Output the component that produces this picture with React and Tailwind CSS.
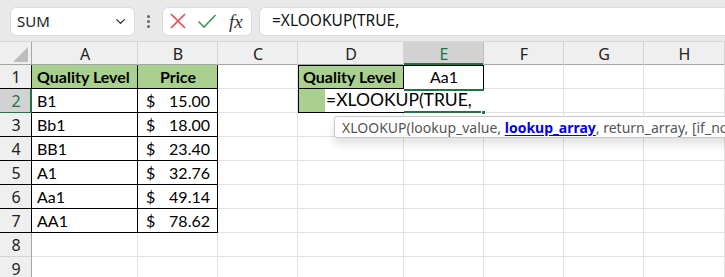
import { ChevronDown } from 'lucide-react'

const COLS = ['A', 'B', 'C', 'D', 'E', 'F', 'G', 'H']
const WIDTHS = ['w-[106px]', 'w-[80px]', 'w-[80px]', 'w-[106px]', 'w-[80px]', 'w-[80px]', 'w-[80px]', 'w-[81px]']

const DATA = [
  ['B1', '15.00'],
  ['Bb1', '18.00'],
  ['BB1', '23.40'],
  ['A1', '32.76'],
  ['Aa1', '49.14'],
  ['AA1', '78.62'],
]

const cellFont = "font-['Lato','Liberation_Sans',sans-serif] text-[16px] text-black"
const uiFont = "font-['Noto_Sans','Open_Sans',sans-serif]"
const grid = 'shadow-[inset_-1px_-1px_0_#e1e1e1]'
const boxed = 'shadow-[inset_-1px_-1px_0_#000]'

function RowHead({ n, active, dark }) {
  return (
    <div className={`w-[32px] h-[24px] flex items-center justify-center shrink-0 ${uiFont} text-[16px] ${
      active
        ? 'bg-[#d2d2d2] text-[#217346] shadow-[inset_-2px_-1px_0_#217346]'
        : dark
          ? 'bg-[#efefef] text-[#222] shadow-[inset_-1px_-1px_0_#000,inset_0_-1px_0_#d4d4d4]'
          : 'bg-[#efefef] text-[#222] shadow-[inset_-1px_0_0_#a6a6a6,inset_0_-1px_0_#d4d4d4]'
    }`}>
      {n}
    </div>
  )
}

function Empty({ i }) {
  return <div className={`${WIDTHS[i]} h-[24px] shrink-0 bg-white ${grid}`} />
}

export default function App() {
  return (
    <div className="w-[725px] h-[277px] overflow-hidden bg-white relative select-none">
      {/* formula bar */}
      <div className="h-[42px] bg-[#e9e9e9] flex items-center gap-0 pl-[10px] shadow-[inset_0_-1px_0_#d6d6d6]">
        <div className={`w-[125px] h-[29px] bg-white rounded-[6px] border border-[#dcdcdc] flex items-center justify-between pl-[6px] pr-[6px] ${uiFont} text-[15px] text-[#222]`}>
          <span>SUM</span>
          <ChevronDown size={15} strokeWidth={2.2} className="text-[#333]" />
        </div>
        <div className="w-[27px] flex flex-col items-center justify-center gap-[2px]">
          <span className="w-[3px] h-[3px] rounded-full bg-[#666]" />
          <span className="w-[3px] h-[3px] rounded-full bg-[#666]" />
          <span className="w-[3px] h-[3px] rounded-full bg-[#666]" />
        </div>
        <div className="w-[90px] h-[29px] bg-white rounded-[6px] border border-[#dcdcdc] flex items-center pl-[6px] gap-[10px]">
          <svg width="18" height="18" viewBox="0 0 18 18">
            <path d="M2 2 L16 16 M16 2 L2 16" stroke="#e5484d" strokeWidth="1.6" fill="none" />
          </svg>
          <svg width="20" height="18" viewBox="0 0 20 18">
            <path d="M1.5 9.5 L7 15 L18.5 3" stroke="#3c9a4a" strokeWidth="1.6" fill="none" />
          </svg>
          <span className="font-['Liberation_Serif',serif] italic text-[19px] text-[#333] leading-none ml-[2px]">fx</span>
        </div>
        <div className={`ml-[7px] flex-1 h-[29px] bg-white rounded-l-[6px] border border-r-0 border-[#dcdcdc] flex items-center pl-[12px] ${uiFont} text-[15.5px] text-[#111]`}>
          =XLOOKUP(TRUE,
        </div>
      </div>

      {/* column headers */}
      <div className="flex h-[23px]">
        <div className="w-[32px] h-[23px] bg-[#efefef] relative shadow-[inset_-1px_-1px_0_#a6a6a6]">
          <svg width="32" height="23" viewBox="0 0 32 23" className="absolute inset-0">
            <polygon points="28,5 28,20 13,20" fill="#bdbdbd" />
          </svg>
        </div>
        {COLS.map((c, i) => (
          <div key={c} className={`${WIDTHS[i]} shrink-0 h-[23px] flex items-center justify-center ${uiFont} text-[16px] ${
            c === 'E'
              ? 'bg-[#d2d2d2] text-[#217346] shadow-[inset_-1px_0_0_#bdbdbd,inset_0_-2px_0_#217346]'
              : 'bg-[#efefef] text-[#222] shadow-[inset_-1px_0_0_#d4d4d4,inset_0_-1px_0_#a6a6a6]'
          }`}>
            {c}
          </div>
        ))}
      </div>

      {/* row 1 */}
      <div className="flex">
        <RowHead n={1} dark />
        <div className={`${WIDTHS[0]} shrink-0 h-[24px] bg-[#a9d08e] ${boxed} ${cellFont} font-bold flex items-center pl-[5px]`}>Quality Level</div>
        <div className={`${WIDTHS[1]} shrink-0 h-[24px] bg-[#a9d08e] ${boxed} ${cellFont} font-bold flex items-center justify-center`}>Price</div>
        <Empty i={2} />
        <div className={`${WIDTHS[3]} shrink-0 h-[24px] bg-[#a9d08e] shadow-[inset_1px_1px_0_#000,inset_-1px_-1px_0_#000] ${cellFont} font-bold flex items-center pl-[5px]`}>Quality Level</div>
        <div className={`${WIDTHS[4]} shrink-0 h-[24px] bg-white shadow-[inset_-1px_1px_0_#000] ${cellFont} flex items-center justify-center`}>Aa1</div>
        <Empty i={5} />
        <Empty i={6} />
        <Empty i={7} />
      </div>

      {DATA.map(([q, p], r) => (
        <div key={q} className="flex">
          <RowHead n={r + 2} active={r === 0} dark={r !== 0} />
          <div className={`${WIDTHS[0]} shrink-0 h-[24px] bg-white ${boxed} ${cellFont} flex items-center pl-[5px]`}>{q}</div>
          <div className={`${WIDTHS[1]} shrink-0 h-[24px] bg-white ${boxed} ${cellFont} flex items-center justify-between pl-[8px] pr-[8px]`}>
            <span>$</span>
            <span>{p}</span>
          </div>
          <Empty i={2} />
          {r === 0 ? (
            <>
              <div className={`${WIDTHS[3]} shrink-0 h-[24px] flex bg-white relative z-10 shadow-[inset_1px_0_0_#000,inset_0_-1px_0_#000]`}>
                <div className="w-[27px] shrink-0 h-[23px] bg-[#a9d08e] shadow-[inset_1px_0_0_#000]" />
                <div className={`h-[23px] flex items-center pl-[1px] whitespace-nowrap ${cellFont} text-[17.5px]`}>
                  =XLOOKUP(TRUE,
                </div>
              </div>
              <div className={`${WIDTHS[4]} shrink-0 h-[24px] bg-white relative shadow-[inset_0_2px_0_#217346,inset_0_-2px_0_#217346]`}>
                <div className="absolute right-[-2px] bottom-[-2px] w-[5px] h-[5px] bg-[#217346] border border-white" />
              </div>
            </>
          ) : (
            <>
              <Empty i={3} />
              <Empty i={4} />
            </>
          )}
          <Empty i={5} />
          <Empty i={6} />
          <Empty i={7} />
        </div>
      ))}

      {[8, 9].map(n => (
        <div key={n} className="flex">
          <RowHead n={n} />
          {COLS.map((c, i) => <Empty key={c} i={i} />)}
        </div>
      ))}

      {/* function tooltip */}
      <div className={`absolute left-[334px] top-[116px] h-[22px] pl-[7px] pr-[10px] bg-white border border-[#c8c8c8] rounded-[3px] shadow-[0_6px_10px_rgba(0,0,0,0.12)] flex items-center whitespace-nowrap ${uiFont} text-[14px] text-[#555] z-20`}>
        XLOOKUP(lookup_value,&nbsp;<span className="font-bold text-[#0000ee] underline underline-offset-2">lookup_array</span>, return_array, [if_not_found], [match_mode])
      </div>
    </div>
  )
}
